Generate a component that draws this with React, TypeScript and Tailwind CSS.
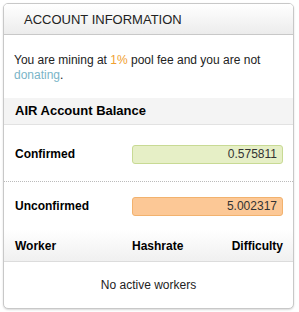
import React from 'react';

export default function App() {
  return (
    <div className="w-[299px] h-[312px] bg-white pt-[3px] pl-[3px] font-['Liberation_Sans',Arial,sans-serif] text-[#222]">
      <div className="w-[291px] h-[306px] border border-[#c8c8c8] rounded-[5px] overflow-hidden bg-white shadow-[0_1px_2px_rgba(0,0,0,0.15)]">
        {/* Header */}
        <div className="h-[31px] border-b border-[#c8c8c8] bg-linear-to-b from-white to-[#ececec] flex items-center pl-[20px]">
          <h2 className="text-[13px] leading-none text-[#222] uppercase">Account Information</h2>
        </div>

        <p className="px-[10px] pt-[18px] pb-[15px] text-[12px] leading-[15px] text-[#222]">
          You are mining at <span className="text-[#f0a030]">1%</span> pool fee and you are not{' '}
          <span className="text-[#7ab5c8]">donating</span>.
        </p>

        {/* Balance */}
        <div className="h-[27px] bg-[#f4f4f4] border-b border-[#e2e2e2] flex items-center px-[11px]">
          <h3 className="text-[13px] font-bold text-black">AIR Account Balance</h3>
        </div>

        <div className="flex items-center justify-between h-[57px] pt-[2px] px-[10px] border-b border-dotted border-[#bbb]">
          <span className="pl-px text-[12px] font-bold text-black">Confirmed</span>
          <div className="w-[151px] h-[19px] rounded-[3px] border border-[#c8da94] bg-[#e6efc6] text-right pr-[5px] text-[12px] leading-[17px] text-[#333]">
            0.575811
          </div>
        </div>

        <div className="flex items-center justify-between h-[48px] px-[10px]">
          <span className="pl-px text-[12px] font-bold text-black">Unconfirmed</span>
          <div className="w-[151px] h-[19px] rounded-[3px] border border-[#f2b26e] bg-[#fcc896] text-right pr-[5px] text-[12px] leading-[17px] text-[#333]">
            5.002317
          </div>
        </div>

        {/* Workers */}
        <div className="grid grid-cols-[117px_1fr_auto] h-[32px] items-center pl-[11px] pr-[10px] border-b border-[#dcdcdc] bg-linear-to-b from-white to-[#f0f0f0] text-[12px] font-bold text-black">
          <span>Worker</span>
          <span>Hashrate</span>
          <span className="text-right">Difficulty</span>
        </div>
        <div className="h-[46px] flex items-center justify-center text-[12px] text-[#222]">
          No active workers
        </div>
      </div>
    </div>
  );
}
